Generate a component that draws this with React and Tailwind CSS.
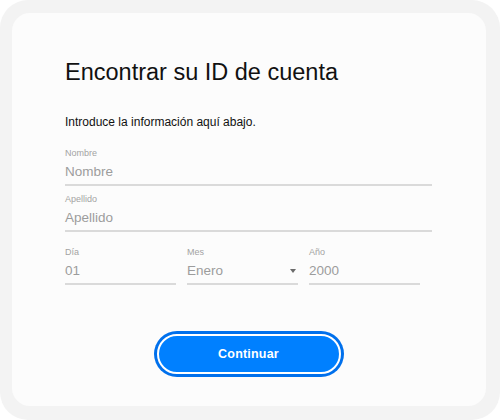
import {useState} from 'react'

const Field = ({label, value, width, select}) => (
  <div className={`${width} border-b-2 border-[#dadada] pb-[3px]`}>
    <p className="text-[9px] leading-[11px] text-[#a3a3a3]">{label}</p>
    <div className="mt-[4px] flex items-center justify-between">
      <span className="text-[13.5px] leading-[18px] text-[#9c9c9c]">{value}</span>
      {select && (
        <span className="mr-[2px] h-0 w-0 border-l-[3px] border-r-[3px] border-t-[4px] border-l-transparent border-r-transparent border-t-[#6b6b6b]"></span>
      )}
    </div>
  </div>
)

export default function App() {
  const [form] = useState({nombre: 'Nombre', apellido: 'Apellido', dia: '01', mes: 'Enero', anio: '2000'})
  return (
    <div className="w-[500px] h-[420px] bg-white font-['Liberation_Sans',Arial,sans-serif]">
      <div className="h-full rounded-[28px] bg-[#f3f3f3] pl-[12px] pt-[13px] pr-[14px] pb-[14px]">
        <div className="h-full rounded-[18px] bg-[#fcfcfc] pl-[53px] pr-[54px] pt-[45px]">
          <h1 className="text-[23.5px] leading-[28px] text-[#111]">Encontrar su ID de cuenta</h1>
          <p className="mt-[28px] text-[12px] leading-[16px] text-[#111]">Introduce la información aquí abajo.</p>
          {/* campos */}
          <div className="mt-[18px] flex flex-col gap-[8px]">
            <Field label="Nombre" value={form.nombre} width="w-full" />
            <Field label="Apellido" value={form.apellido} width="w-full" />
          </div>
          <div className="mt-[15px] flex gap-[11px]">
            <Field label="Día" value={form.dia} width="w-[111px]" />
            <Field label="Mes" value={form.mes} width="w-[111px]" select />
            <Field label="Año" value={form.anio} width="w-[111px]" />
          </div>
          <div className="mt-[49px] flex justify-center">
            <button className="w-[184px] h-[40px] rounded-full border-2 border-white bg-[#0080ff] ring-[3px] ring-[#0070ec] text-[12.5px] font-bold text-white tracking-[0.2px]">
              Continuar
            </button>
          </div>
        </div>
      </div>
    </div>
  )
}
